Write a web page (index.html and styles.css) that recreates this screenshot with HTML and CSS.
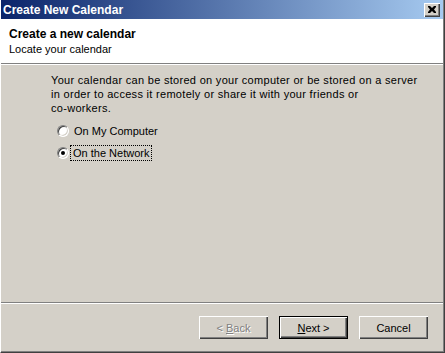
FILE: index.html
```html
<!DOCTYPE html>
<html lang="en">
<head>
    <meta charset="UTF-8">
    <title>Create New Calendar</title>
    <link rel="stylesheet" href="styles.css">
</head>
<body>
    <div class="window">
        <div class="titlebar">
            <span class="title">Create New Calendar</span>
            <button class="close-btn">
                <svg width="8" height="7" viewBox="0 0 8 7"><path d="M0 0h2l2 2 2-2h2v1l-2 2.5 2 2.5v1h-2l-2-2-2 2h-2v-1l2-2.5-2-2.5z" fill="#000"/></svg>
            </button>
        </div>

        <div class="header">
            <h1>Create a new calendar</h1>
            <p>Locate your calendar</p>
        </div>

        <div class="content">
            <p class="intro">Your calendar can be stored on your computer or be stored on a server<br>in order to access it remotely or share it with your friends or<br>co-workers.</p>
            <div class="options">
                <label class="option">
                    <span class="radio"></span>
                    <span class="label">On My Computer</span>
                </label>
                <label class="option">
                    <span class="radio checked"></span>
                    <span class="label focused">On the Network</span>
                </label>
            </div>
        </div>

        <div class="footer">
            <button class="btn" disabled>&lt; <u>B</u>ack</button>
            <button class="btn default"><u>N</u>ext &gt;</button>
            <button class="btn">Cancel</button>
        </div>
    </div>
</body>
</html>
```

FILE: styles.css
```css
* { margin: 0; padding: 0; box-sizing: border-box; }
body {
    font-family: 'Liberation Sans', Arial, sans-serif;
    font-size: 11px;
    color: #000;
    background: #d4d0c8;
}
.window {
    width: 445px;
    height: 353px;
    display: flex;
    flex-direction: column;
    background: #d4d0c8;
    border-left: 1px solid #fff;
    border-right: 1px solid #404040;
    border-bottom: 1px solid #404040;
    box-shadow: inset -1px -1px 0 #808080;
}
.titlebar {
    height: 19px;
    margin-right: 1px;
    display: flex;
    align-items: center;
    justify-content: space-between;
    padding: 0 3px 0 2px;
    background: linear-gradient(90deg, #0a246a 0%, #a6caf0 100%);
}
.title {
    color: #fff;
    font-weight: bold;
    font-size: 12px;
}
.close-btn {
    width: 16px;
    height: 14px;
    display: flex;
    align-items: center;
    justify-content: center;
    background: #d4d0c8;
    border: none;
    box-shadow: inset 1px 1px 0 #fff, inset -1px -1px 0 #404040, inset -2px -2px 0 #808080;
}
.header {
    height: 45px;
    margin-right: 1px;
    background: #fff;
    padding: 8px 0 0 8px;
    border-bottom: 1px solid #808080;
    box-shadow: 0 1px 0 #fff;
}
.header h1 {
    font-size: 12px;
    font-weight: bold;
    line-height: 15px;
}
.header p { line-height: 14px; }
.content {
    flex: 1;
    padding: 8px 10px 0 50px;
    margin-top: 1px;
    border-bottom: 1px solid #808080;
    margin-right: 1px;
    box-shadow: 0 1px 0 #fff;
}
.intro {
    line-height: 14px;
    letter-spacing: 0.3px;
    white-space: nowrap;
}
.options {
    display: flex;
    flex-direction: column;
    gap: 8px;
    margin: 9px 0 0 6px;
}
.option {
    display: flex;
    align-items: center;
    gap: 4px;
    height: 14px;
}
.radio {
    width: 12px;
    height: 12px;
    border-radius: 50%;
    background: #fff;
    border: 1px solid;
    border-color: #808080 #fff #fff #808080;
    box-shadow: inset 1px 1px 0 #404040, inset -1px -1px 0 #d4d0c8;
    display: flex;
    align-items: center;
    justify-content: center;
}
.radio.checked::after {
    content: "";
    width: 4px;
    height: 4px;
    border-radius: 50%;
    background: #000;
}
.label { padding: 1px 1px; }
.label.focused {
    outline: 1px dotted #000;
    margin-left: -2px;
    padding: 1px 2px;
}
.footer {
    height: 48px;
    display: flex;
    justify-content: flex-end;
    align-items: flex-start;
    gap: 11px;
    padding: 12px 16px 0 0;
    margin-top: 1px;
}
.btn {
    width: 69px;
    height: 23px;
    font-family: inherit;
    font-size: 11px;
    color: #000;
    background: #d4d0c8;
    border: none;
    box-shadow: inset 1px 1px 0 #fff, inset -1px -1px 0 #404040, inset -2px -2px 0 #808080;
}
.btn.default {
    border: 1px solid #000;
    box-shadow: inset 1px 1px 0 #fff, inset -1px -1px 0 #404040, inset -2px -2px 0 #808080;
}
.btn:disabled {
    color: #808080;
    text-shadow: 1px 1px 0 #fff;
}
```
